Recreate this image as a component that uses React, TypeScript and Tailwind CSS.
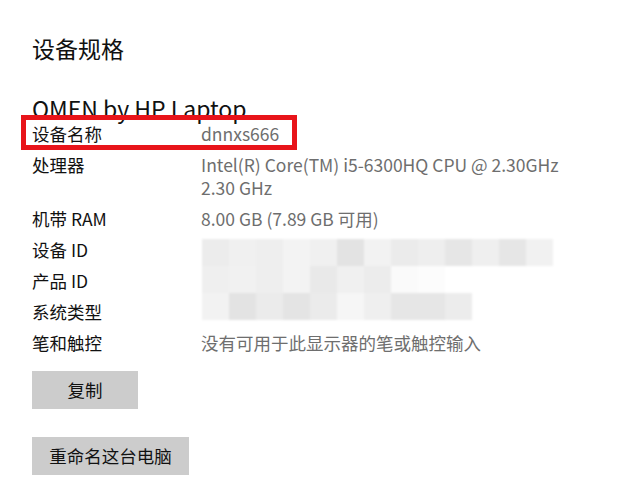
const mosaic: string[][] = [
  ["#ececec", "#f0f0f0", "#eeeeee", "#f3f3f3", "#f0f0f0", "#e3e3e3", "#f2f2f2", "#ebebeb", "#eeeeee", "#e6e6e6", "#efefef", "#e6e6e6", "#f1f1f1"],
  ["#efefef", "#f1f1f1", "#eeeeee", "#f3f3f3", "#e9e9e9", "#f0f0f0", "#ececec", "#fafafa", "#fcfcfc", "#ffffff", "#ffffff", "#ffffff", "#ffffff"],
  ["#f2f2f2", "#e3e3e3", "#ebebeb", "#e4e4e4", "#ebebeb", "#f6f6f6", "#efefef", "#e6e6e6", "#e6e6e6", "#ececec", "#ffffff", "#ffffff", "#ffffff"],
];

const Row = ({ label, children }: { label: string; children?: React.ReactNode }) => (
  <div className="flex leading-[23px]">
    <div className="w-[169px] shrink-0 text-[#111]">{label}</div>
    <div className="text-[#6e6e6e]">{children}</div>
  </div>
);

export default function App() {
  return (
    <div
      className="h-[480px] w-[626px] overflow-hidden bg-white pl-8 text-[17.5px]"
      style={{ fontFamily: '"Noto Sans CJK SC", "Noto Sans", sans-serif' }}
    >
      <h1 className="pt-8 text-[23px] leading-8 text-[#111]">设备规格</h1>
      <div className="mt-[30px] text-[23px] leading-7 text-[#111]">OMEN by HP Laptop</div>

      <div className="flex flex-col gap-2">
        <div className="relative">
          <Row label="设备名称">dnnxs666</Row>
          {/* red highlight */}
          <div className="pointer-events-none absolute -left-[11px] -top-[7px] h-[35px] w-[276px] border-[5px] border-[#e8141a]" />
        </div>
        <Row label="处理器">
          Intel(R) Core(TM) i5-6300HQ CPU @ 2.30GHz
          <br />
          2.30 GHz
        </Row>
        <Row label="机带 RAM">8.00 GB (7.89 GB 可用)</Row>

        <div className="relative flex flex-col gap-2">
          <Row label="设备 ID" />
          <Row label="产品 ID" />
          <Row label="系统类型" />
          {/* redacted values */}
          <div className="absolute left-[170px] top-[1px] grid grid-cols-[repeat(13,27px)] grid-rows-[repeat(3,27px)] blur-[1px]">
            {mosaic.flat().map((c, i) => (
              <div key={i} style={{ backgroundColor: c }} />
            ))}
          </div>
        </div>

        <Row label="笔和触控">没有可用于此显示器的笔或触控输入</Row>
      </div>

      <button className="mt-[17px] block h-[38px] w-[106px] bg-[#cccccc] text-center text-[#111]">复制</button>
      <button className="mt-[28px] block h-[38px] w-[157px] bg-[#cccccc] text-center text-[#111]">重命名这台电脑</button>
    </div>
  );
}
